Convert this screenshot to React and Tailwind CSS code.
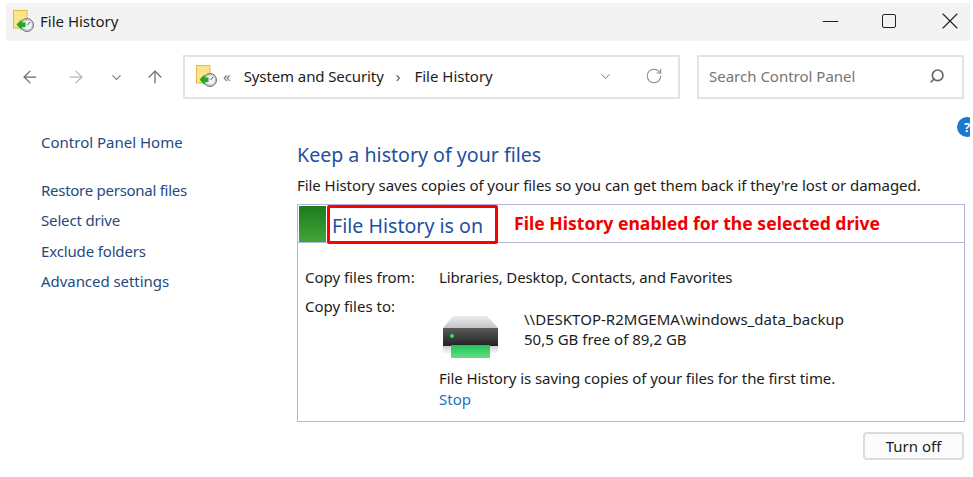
import React from "react";
import { ArrowLeft, ArrowRight, ArrowUp, ChevronDown, RotateCw, Search, Minus, X } from "lucide-react";

const FileHistoryIcon = () => (
  <svg width="22" height="23" viewBox="0 0 22 23" className="shrink-0">
    <rect x="0.5" y="0.5" width="13.5" height="17.5" fill="#fce48a" stroke="#e3b94c" />
    <circle cx="14" cy="15" r="6.5" fill="#c4c8cc" stroke="#6f7478" />
    <circle cx="14.5" cy="15" r="4.5" fill="#eef0f2" />
    <path d="M14.5 15l2.5-3" stroke="#555" strokeWidth="1" />
    <path d="M3.5 14.5l5-5v3h4v4.5h-4v3z" fill="#22a822" />
  </svg>
);

const DriveIcon = () => (
  <svg width="60" height="45" viewBox="0 0 60 45" className="shrink-0">
    <defs>
      <linearGradient id="driveTop" x1="0" y1="0" x2="0" y2="1">
        <stop offset="0" stopColor="#ececec" />
        <stop offset="1" stopColor="#c4c4c4" />
      </linearGradient>
      <linearGradient id="driveBody" x1="0" y1="0" x2="0" y2="1">
        <stop offset="0" stopColor="#5a5a5a" />
        <stop offset="1" stopColor="#222" />
      </linearGradient>
      <linearGradient id="driveGreen" x1="0" y1="0" x2="0" y2="1">
        <stop offset="0" stopColor="#22c455" />
        <stop offset="1" stopColor="#62de88" />
      </linearGradient>
      <linearGradient id="driveTray" x1="0" y1="0" x2="0" y2="1">
        <stop offset="0" stopColor="#cfcfcf" />
        <stop offset="1" stopColor="#f6f6f6" />
      </linearGradient>
    </defs>
    <path d="M12 1h34l11 12H2z" fill="url(#driveTop)" />
    <rect x="2" y="13" width="55" height="18" fill="url(#driveBody)" />
    <circle cx="11" cy="21" r="2" fill="#35e04f" />
    <rect x="2" y="31" width="55" height="7" fill="url(#driveTray)" />
    <rect x="10" y="30" width="39" height="13" rx="1" fill="url(#driveGreen)" />
  </svg>
);

const links = [
  { label: "Restore personal files", cls: "tracking-[-0.27px]" },
  { label: "Select drive", cls: "tracking-[-0.15px]" },
  { label: "Exclude folders", cls: "tracking-[-0.15px]" },
  { label: "Advanced settings", cls: "tracking-[-0.05px]" },
];

export default function App() {
  return (
    <div className="relative w-[973px] h-[477px] overflow-hidden bg-white text-[15px] leading-5 text-[#1c1c1c] font-['Noto_Sans',sans-serif]">
      {/* title bar */}
      <div className="flex items-center h-[38px] mt-[3px] ml-[6px] w-[964px] bg-[#f3f3f3] pl-[7px] pb-[2px]">
        <FileHistoryIcon />
        <span className="ml-[5px]">File History</span>
        <div className="ml-auto flex items-center pr-[6px] text-[#222]">
          <div className="flex justify-center w-[28px]">
            <Minus size={25} strokeWidth={1.1} />
          </div>
          <div className="flex justify-center w-[28px] ml-[31px]">
            <div className="w-[14px] h-[14px] rounded-[2px] border-[1.5px] border-[#222]" />
          </div>
          <div className="flex justify-center w-[28px] ml-[33px]">
            <X size={28} strokeWidth={1} />
          </div>
        </div>
      </div>

      {/* toolbar */}
      <div className="flex items-center h-[44px] mt-[14px] pl-[20px]">
        <ArrowLeft size={20} strokeWidth={1.5} className="text-[#6b6b6b]" />
        <ArrowRight size={20} strokeWidth={1.5} className="ml-[26px] text-[#b5b5b5]" />
        <ChevronDown size={15} strokeWidth={1.7} className="ml-[23px] text-[#777]" />
        <ArrowUp size={20} strokeWidth={1.5} className="ml-[21px] text-[#6b6b6b]" />
        <div className="flex items-center ml-[18px] w-[497px] h-[44px] border-2 border-[#e3e3e3] pl-[11px] pr-[15px] pb-[2px]">
          <FileHistoryIcon />
          <span className="ml-[5px] text-[#777] text-[15px]">«</span>
          <span className="ml-[13px] tracking-[-0.1px]">System and Security</span>
          <span className="ml-[12px] text-[#555] text-[15px]">›</span>
          <span className="ml-[14px]">File History</span>
          <ChevronDown size={15} strokeWidth={1.4} className="ml-auto text-[#666]" />
          <RotateCw size={18} strokeWidth={1.4} className="ml-[32px] text-[#8a8a8a]" />
        </div>
        <div className="flex items-center ml-[17px] w-[267px] h-[44px] border-2 border-[#e3e3e3] pl-[10px] pr-[17px] pb-[2px] text-[#757575]">
          <span>Search Control Panel</span>
          <Search size={16} strokeWidth={2.4} className="ml-auto -scale-x-100 text-[#666]" />
        </div>
      </div>

      {/* help badge, cut off by the window edge */}
      <div className="absolute left-[957px] top-[117px] w-[13px] h-[20px] overflow-hidden">
        <div className="flex items-center justify-center w-[20px] h-[20px] rounded-full bg-[#1b78d0] text-white text-[13px] font-bold">
          ?
        </div>
      </div>

      {/* body */}
      <div className="flex">
        <aside className="w-[297px] pl-[41px] pt-[33px] text-[#1f4a80]">
          <div>Control Panel Home</div>
          <div className="mt-[28px] flex flex-col gap-[10.4px]">
            {links.map((link) => (
              <div key={link.label} className={link.cls}>
                {link.label}
              </div>
            ))}
          </div>
        </aside>

        <main className="w-[668px] pt-[42px]">
          <h1 className="text-[19.6px] leading-7 text-[#1f4fa0]">Keep a history of your files</h1>
          <p className="mt-[6px] tracking-[-0.06px]">File History saves copies of your files so you can get them back if they're lost or damaged.</p>

          <div className="mt-[9px] h-[218px] border border-[#b4b4dc] flex flex-col">
            <div className="flex items-center h-[38px] border-b border-[#b4b4dc]">
              <div className="ml-[1px] w-[27px] h-[36px] bg-gradient-to-b from-[#1e7a1e] to-[#41a63a]" />
              <div className="flex items-center ml-[1px] w-[171px] h-[39px] -mb-[1px] border-[3px] border-[#ff0000] rounded-[2px] pl-[2px] pt-[4px] text-[19.6px] text-[#1f4fa0]">
                File History is on
              </div>
              <span className="ml-[16px] -mt-[2px] text-[17.6px] font-bold text-[#f00000]">File History enabled for the selected drive</span>
            </div>

            <div className="pl-[7px] pt-[24px]">
              <div className="flex">
                <span className="w-[134px]">Copy files from:</span>
                <span className="tracking-[-0.14px]">Libraries, Desktop, Contacts, and Favorites</span>
              </div>
              <div className="flex mt-[9px]">
                <span className="w-[134px]">Copy files to:</span>
                <div>
                  <div className="flex mt-[3px]">
                    <div className="mt-[16px] ml-[2px] h-[45px]">
                      <DriveIcon />
                    </div>
                    <div className="ml-[23px] pt-[10px]">
                      <div className="tracking-[0.02px]">\\DESKTOP-R2MGEMA\windows_data_backup</div>
                      <div>50,5 GB free of 89,2 GB</div>
                    </div>
                  </div>
                  <div className="mt-[8px] tracking-[-0.08px]">File History is saving copies of your files for the first time.</div>
                  <div className="mt-[1px] text-[#1f6fc0]">Stop</div>
                </div>
              </div>
            </div>
          </div>

          <div className="flex justify-end mt-[10px] pr-[1px]">
            <button className="w-[101px] h-[28px] border-2 border-[#dcdcdc] rounded-[4px] bg-[#fbfbfb] text-[15px]">Turn off</button>
          </div>
        </main>
      </div>
    </div>
  );
}
